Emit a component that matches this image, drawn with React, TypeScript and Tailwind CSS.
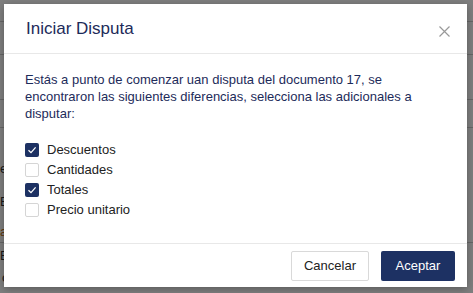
import React from "react";

const items = [
  { label: "Descuentos", checked: true },
  { label: "Cantidades", checked: false },
  { label: "Totales", checked: true },
  { label: "Precio unitario", checked: false },
];

const Check = ({ checked }: { checked: boolean }) => {
  if (checked) {
    return (
      <span className="w-[14px] h-[14px] bg-[#1d3163] rounded-[2px] flex items-center justify-center">
        <svg width="10" height="10" viewBox="0 0 10 10" fill="none">
          <path d="M1.5 5.2 L4 7.6 L8.6 2.4" stroke="#ffffff" strokeWidth="1.3" />
        </svg>
      </span>
    );
  }
  return <span className="w-[14px] h-[14px] bg-white border border-[#d5d5d5] rounded-[2px]" />;
};

export default function App() {
  return (
    <div
      className="relative w-[473px] h-[293px] overflow-hidden bg-white"
      style={{ fontFamily: '"Liberation Sans", Arial, sans-serif' }}
    >
      {/* page behind the overlay */}
      <div className="absolute inset-0 flex flex-col text-[13px] text-[#333]">
        <div className="h-[22px] border-b border-[#ccc]" />
        <div className="h-[33px] border-b border-[#ccc]" />
        <div className="h-[45px] border-b border-[#ccc]" />
        <div className="h-[28px] border-b border-[#ccc]" />
        <div className="h-[54px] flex items-end pb-[4px]">e</div>
        <div className="h-[40px] flex items-center">E</div>
        <div className="h-[20px] text-[#c07020]">a</div>
        <div className="h-[26px] border-t border-[#ccc] flex items-center">E</div>
        <div className="pl-[2px]">ontrasta</div>
      </div>

      {/* overlay */}
      <div className="absolute inset-0 bg-black/50 flex items-start justify-start p-[4px]">
        <div className="w-[463px] h-[283px] bg-white flex flex-col shadow-[0_2px_8px_rgba(0,0,0,0.3)]">
          {/* header */}
          <div className="h-[50px] border-b border-[#e8e8e8] flex items-center justify-between pl-[22px] pr-[17px]">
            <h2 className="text-[17px] text-[#1d2b5a]">Iniciar Disputa</h2>
            <svg width="11" height="11" viewBox="0 0 11 11" className="mt-[6px]">
              <path d="M0.5 0.5 L10.5 10.5 M10.5 0.5 L0.5 10.5" stroke="#999999" strokeWidth="1.2" />
            </svg>
          </div>

          {/* body */}
          <div className="flex-1 pl-[21px] pr-[21px] pt-[17px]">
            <p className="text-[13px] leading-[17px] text-[#1d2b5a]">
              Estás a punto de comenzar uan disputa del documento 17, se encontraron las siguientes diferencias, selecciona las adicionales a disputar:
            </p>
            <div className="mt-[18px] flex flex-col">
              {items.map((it, i) => (
                <label key={i} className="h-[20px] flex items-center gap-[8px] text-[13px] text-[#222]">
                  <Check checked={it.checked} />
                  <span>{it.label}</span>
                </label>
              ))}
            </div>
          </div>

          {/* footer */}
          <div className="h-[44px] border-t border-[#e8e8e8] flex items-start justify-end gap-[12px] pt-[7px] pr-[12px]">
            <button className="w-[78px] h-[30px] border border-[#d9d9d9] rounded-[2px] bg-white text-[13px] text-[#222]">
              Cancelar
            </button>
            <button className="w-[74px] h-[30px] rounded-[2px] bg-[#1d3163] text-[13px] text-white">
              Aceptar
            </button>
          </div>
        </div>
      </div>
    </div>
  );
}
